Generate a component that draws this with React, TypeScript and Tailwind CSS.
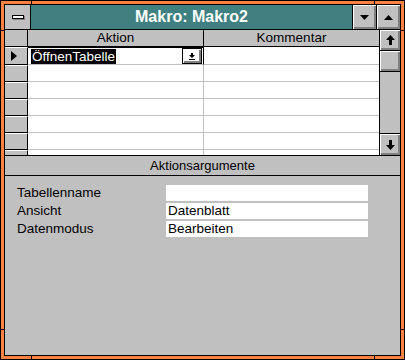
import React from "react";

const bevel = "shadow-[inset_1px_1px_0_#ffffff,inset_-1px_-1px_0_#808080,inset_-2px_-2px_0_#808080]";

function UpArrow() {
  return (
    <svg width="9" height="10" viewBox="0 0 9 10">
      <polygon points="4.5,0 9,5 6,5 6,10 3,10 3,5 0,5" fill="#000" />
    </svg>
  );
}

function DownArrow() {
  return (
    <svg width="9" height="10" viewBox="0 0 9 10">
      <polygon points="3,0 6,0 6,5 9,5 4.5,10 0,5 3,5" fill="#000" />
    </svg>
  );
}

export default function App() {
  const rows = [0, 1, 2, 3, 4, 5, 6];
  const args = [
    { label: "Tabellenname", value: "" },
    { label: "Ansicht", value: "Datenblatt" },
    { label: "Datenmodus", value: "Bearbeiten" },
  ];

  return (
    <div
      className="relative w-[405px] h-[360px] bg-[#ff8040] border border-black p-[3px] flex flex-col"
      style={{ fontFamily: '"Liberation Sans", Arial, sans-serif' }}
    >
      {/* frame corner notches */}
      <div className="absolute left-[30px] top-0 w-px h-[4px] bg-black" />
      <div className="absolute left-[373px] top-0 w-px h-[4px] bg-black" />
      <div className="absolute left-[30px] bottom-0 w-px h-[4px] bg-black" />
      <div className="absolute left-[373px] bottom-0 w-px h-[4px] bg-black" />
      <div className="absolute left-0 top-[29px] w-[4px] h-px bg-black" />
      <div className="absolute right-0 top-[29px] w-[4px] h-px bg-black" />
      <div className="absolute left-0 top-[328px] w-[4px] h-px bg-black" />
      <div className="absolute right-0 top-[328px] w-[4px] h-px bg-black" />

      <div className="flex-1 border border-black bg-[#c0c0c0] flex flex-col min-h-0">
        {/* title bar */}
        <div className="h-[25px] border-b border-black flex shrink-0">
          <div className="w-[26px] border-r border-black flex items-center justify-center">
            <div className="w-[12px] h-[4px] bg-white border border-black shadow-[1px_1px_0_#808080] ml-[1px]" />
          </div>
          <div className="flex-1 bg-[#408080] flex items-center justify-center text-white text-[16px] font-bold">
            Makro: Makro2
          </div>
          <div className={`w-[24px] border-l border-black flex items-center justify-center ${bevel}`}>
            <svg width="9" height="5" viewBox="0 0 9 5">
              <polygon points="0,0 9,0 4.5,5" fill="#000" />
            </svg>
          </div>
          <div className={`w-[24px] border-l border-black flex items-center justify-center ${bevel}`}>
            <svg width="9" height="5" viewBox="0 0 9 5">
              <polygon points="4.5,0 9,5 0,5" fill="#000" />
            </svg>
          </div>
        </div>

        {/* macro grid */}
        <div className="h-[126px] border-b border-black flex shrink-0 overflow-hidden">
          <div className="flex-1 flex flex-col overflow-hidden">
            <div className="h-[17px] border-b border-black flex shrink-0 text-[13.5px] text-black">
              <div className="w-[23px] border-r border-black" />
              <div className="w-[176px] border-r border-black flex items-center justify-center leading-none">
                Aktion
              </div>
              <div className="flex-1 flex items-center justify-center leading-none">Kommentar</div>
            </div>
            {rows.map((r) => (
              <div
                key={r}
                className={`${r === 0 ? "h-[18px]" : "h-[17px]"} flex shrink-0`}
              >
                <div className="w-[23px] border-r border-b border-black bg-[#c0c0c0] border-t border-t-white flex items-center pl-[6px]">
                  {r === 0 && (
                    <svg width="6" height="10" viewBox="0 0 6 10">
                      <polygon points="0,0 6,5 0,10" fill="#000" />
                    </svg>
                  )}
                </div>
                <div
                  className={`w-[176px] bg-white border-b border-r border-[#c0c0c0] flex items-center ${
                    r === 0 ? "border-t border-t-black border-r-black pl-[3px]" : ""
                  }`}
                >
                  {r === 0 && (
                    <>
                      <span className="bg-black text-white text-[13.5px] leading-[15px] px-[1px]">
                        ÖffnenTabelle
                      </span>
                      <div className={`ml-auto mr-[1px] w-[20px] h-[16px] border border-black flex items-center justify-center ${bevel}`}>
                        <svg width="6" height="7" viewBox="0 0 6 7">
                          <polygon points="2,0 4,0 4,2 6,2 3,5 0,2 2,2" fill="#000" />
                          <rect x="0" y="6" width="6" height="1" fill="#000" />
                        </svg>
                      </div>
                    </>
                  )}
                </div>
                <div className="flex-1 bg-white border-b border-[#c0c0c0]" />
              </div>
            ))}
          </div>

          {/* scrollbar */}
          <div className="w-[21px] border-l border-black flex flex-col shrink-0">
            <div className={`h-[21px] border-b border-black flex items-center justify-center ${bevel}`}>
              <UpArrow />
            </div>
            <div className={`h-[21px] border-b border-black ${bevel}`} />
            <div className="flex-1 bg-[#c0c0c0]" />
            <div className={`h-[22px] border-t border-black flex items-center justify-center ${bevel}`}>
              <DownArrow />
            </div>
          </div>
        </div>

        {/* action arguments */}
        <div className="h-[20px] border-b border-black flex items-center justify-center text-[13px] text-black shrink-0">
          Aktionsargumente
        </div>
        <div className="flex-1 pt-[9px] pl-[12px] flex flex-col gap-[2px]">
          {args.map((a) => (
            <div key={a.label} className="flex h-[16px] items-center text-[13.5px] text-black">
              <div className="w-[149px]">{a.label}</div>
              <div className="w-[202px] h-[16px] bg-white pl-[2px] flex items-center leading-none">
                {a.value}
              </div>
            </div>
          ))}
        </div>
      </div>
    </div>
  );
}
